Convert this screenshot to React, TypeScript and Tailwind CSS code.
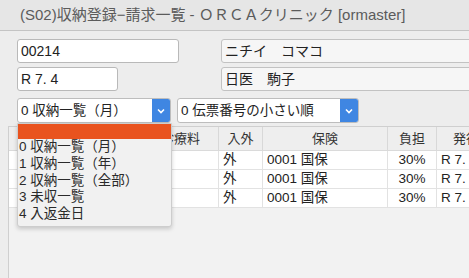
import React from "react";

const columns = [
  { label: "番号", w: "w-[52px]", align: "text-left" },
  { label: "診療日", w: "w-[82px]", align: "text-left" },
  { label: "診療料", w: "w-[76px]", align: "text-left" },
  { label: "入外", w: "w-[44px]", align: "text-left" },
  { label: "保険", w: "w-[125px]", align: "text-left" },
  { label: "負担", w: "w-[49px]", align: "text-center" },
  { label: "発行日", w: "w-[72px]", align: "text-left" },
];

// hidden columns under the open menu stay blank
const rows = [
  ["", "", "", "外", "0001 国保", "30%", "R 7. 4. 1"],
  ["", "", "", "外", "0001 国保", "30%", "R 7. 4. 8"],
  ["", "", "", "外", "0001 国保", "30%", "R 7. 4.15"],
];

const menuItems = [
  "0 収納一覧（月）",
  "1 収納一覧（年）",
  "2 収納一覧（全部）",
  "3 未収一覧",
  "4 入返金日",
];

const Chevron = () => (
  <svg width="8" height="6" viewBox="0 0 8 6">
    <path d="M1 1.5 L4 4.5 L7 1.5" fill="none" stroke="white" strokeWidth="1.6" />
  </svg>
);

const Select: React.FC<{ value: string; width: string }> = ({ value, width }) => (
  <div className={`${width} shrink-0 h-[25px] flex bg-white border border-[#bdbdbd] rounded-[3px] overflow-hidden`}>
    <div className="flex-1 pl-[3px] text-[13.5px] leading-[23px] text-[#222] whitespace-nowrap">{value}</div>
    <div className="w-[18px] bg-[#3f86e2] flex items-center justify-center">
      <Chevron />
    </div>
  </div>
);

export default function App() {
  return (
    <div
      className="relative w-[469px] h-[278px] overflow-hidden bg-[#ededed]"
      style={{ fontFamily: '"Liberation Sans", "Noto Sans CJK JP", sans-serif' }}
    >
      {/* title bar */}
      <div className="h-[31px] bg-[#e6e6e6] border-b border-[#c4c4c4] pl-[20px] text-[15px] leading-[30px] text-[#5b5b5b] whitespace-nowrap">
        (S02)収納登録−請求一覧 - ＯＲＣＡクリニック [ormaster]
      </div>

      {/* patient fields */}
      <div className="flex flex-col gap-[4px] pt-[8px] pl-[17px]">
        <div className="flex gap-[42px]">
          <div className="w-[162px] shrink-0 h-[24px] bg-white border border-[#b9b9b9] rounded-[3px] pl-[3px] text-[14px] leading-[22px] text-[#222]">
            00214
          </div>
          <div className="w-[260px] shrink-0 h-[24px] bg-[#f6f6f6] border border-[#c2c2c2] rounded-[3px] pl-[3px] text-[14px] leading-[22px] text-[#222] whitespace-pre">
            ニチイ　コマコ
          </div>
        </div>
        <div className="flex gap-[103px]">
          <div className="w-[101px] shrink-0 h-[24px] bg-white border border-[#b9b9b9] rounded-[3px] pl-[3px] text-[14px] leading-[22px] text-[#222] whitespace-pre">
            R 7. 4
          </div>
          <div className="w-[260px] shrink-0 h-[24px] bg-[#f6f6f6] border border-[#c2c2c2] rounded-[3px] pl-[3px] text-[14px] leading-[22px] text-[#222] whitespace-pre">
            日医　駒子
          </div>
        </div>
      </div>

      {/* selects */}
      <div className="flex gap-[6px] pl-[17px] pt-[7px]">
        <Select value="0 収納一覧（月）" width="w-[154px]" />
        <Select value="0 伝票番号の小さい順" width="w-[182px]" />
      </div>

      {/* table */}
      <div className="ml-[8px] mt-[3px] h-[160px] bg-[#f2f2f2] border-l border-t border-[#cfcfcf] overflow-hidden">
        <div className="flex h-[24px] bg-[#eeeeee] border-b border-[#dadada] whitespace-nowrap">
          {columns.map((c) => (
            <div
              key={c.label}
              className={`${c.w} shrink-0 border-r border-[#d8d8d8] text-center text-[13px] leading-[23px] text-[#333]`}
            >
              {c.label}
            </div>
          ))}
        </div>
        {rows.map((r, i) => (
          <div key={i} className="flex h-[19px] bg-white border-b border-[#e2e2e2] whitespace-nowrap">
            {r.map((cell, j) => (
              <div
                key={j}
                className={`${columns[j].w} ${columns[j].align} shrink-0 border-r border-[#e2e2e2] px-[4px] text-[13.5px] leading-[18px] text-[#222] whitespace-pre`}
              >
                {cell}
              </div>
            ))}
          </div>
        ))}
      </div>

      {/* open dropdown menu */}
      <div className="absolute left-[17px] top-[123px] w-[155px] h-[104px] bg-[#f1f1f1] border border-[#cdcdcd] shadow-[0_2px_4px_rgba(0,0,0,0.18)] rounded-b-[3px]">
        <div className="h-[15px] bg-[#e9531f]" />
        {menuItems.map((m) => (
          <div key={m} className="h-[16.75px] pl-[1px] text-[13.5px] leading-[16.75px] text-[#2a2a2a] whitespace-nowrap">
            {m}
          </div>
        ))}
      </div>
    </div>
  );
}
